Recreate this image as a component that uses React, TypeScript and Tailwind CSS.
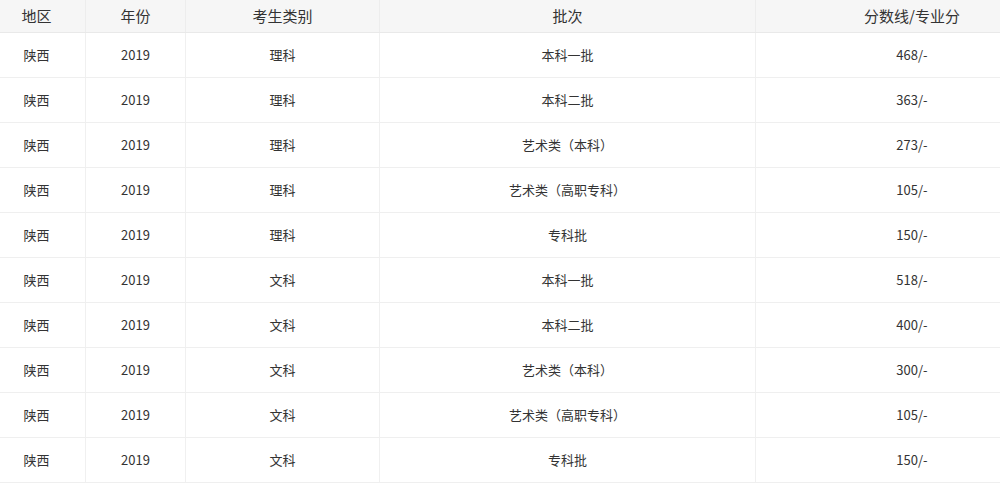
const rows: [string, string][] = [
  ["理科", "本科一批|468/-"],
  ["理科", "本科二批|363/-"],
  ["理科", "艺术类（本科）|273/-"],
  ["理科", "艺术类（高职专科）|105/-"],
  ["理科", "专科批|150/-"],
  ["文科", "本科一批|518/-"],
  ["文科", "本科二批|400/-"],
  ["文科", "艺术类（本科）|300/-"],
  ["文科", "艺术类（高职专科）|105/-"],
  ["文科", "专科批|150/-"],
];

const cols = "grid grid-cols-[86px_100px_194px_376px_244px]";

export default function App() {
  return (
    <div
      className="w-[1000px] bg-white text-[#333]"
      style={{ fontFamily: '"Noto Sans CJK SC", "Microsoft YaHei", sans-serif' }}
    >
      <div className={`${cols} h-[33px] items-center bg-[#f6f6f6] border-b border-[#e9e9e9] text-[15px]`}>
        <div className="h-full flex items-center justify-center pr-[12px] border-r border-[#ededed]">地区</div>
        <div className="h-full flex items-center justify-center border-r border-[#ededed]">年份</div>
        <div className="h-full flex items-center justify-center border-r border-[#ededed]">考生类别</div>
        <div className="h-full flex items-center justify-center border-r border-[#ededed]">批次</div>
        <div className="h-full flex items-center justify-center pl-[68px]">分数线/专业分</div>
      </div>
      {rows.map(([type, rest], i) => {
        const [batch, score] = rest.split("|");
        return (
          <div key={i} className={`${cols} h-[45px] border-b border-[#efefef] text-[13px]`}>
            <div className="flex items-center justify-center pr-[12px] border-r border-[#f0f0f0]">陕西</div>
            <div className="flex items-center justify-center border-r border-[#f0f0f0]">2019</div>
            <div className="flex items-center justify-center border-r border-[#f0f0f0]">{type}</div>
            <div className="flex items-center justify-center border-r border-[#f0f0f0]">{batch}</div>
            <div className="flex items-center justify-center pl-[68px]">{score}</div>
          </div>
        );
      })}
    </div>
  );
}
